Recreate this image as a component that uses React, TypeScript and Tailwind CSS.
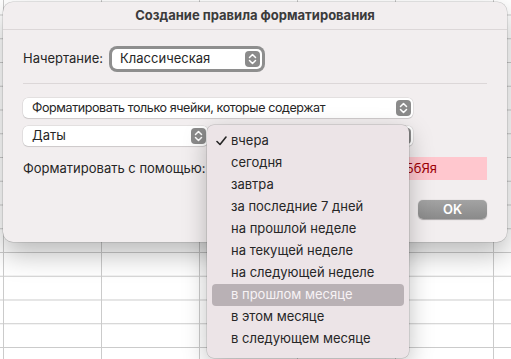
import React from "react";

const font = { fontFamily: '"Inter", "Liberation Sans", sans-serif' };

const menuItems = [
  "вчера",
  "сегодня",
  "завтра",
  "за последние 7 дней",
  "на прошлой неделе",
  "на текущей неделе",
  "на следующей неделе",
  "в прошлом месяце",
  "в этом месяце",
  "в следующем месяце",
];

function Stepper() {
  return (
    <span className="flex h-[16px] w-[15px] items-center justify-center rounded-[4px] bg-[#8b8b8b]">
      <svg width="9" height="12" viewBox="0 0 9 12" fill="none" stroke="white" strokeWidth="1.5" strokeLinecap="round" strokeLinejoin="round">
        <path d="M1.5 4.5 L4.5 1.5 L7.5 4.5" />
        <path d="M1.5 7.5 L4.5 10.5 L7.5 7.5" />
      </svg>
    </span>
  );
}

function Select({ label, className = "" }: { label: string; className?: string }) {
  return (
    <div
      className={`flex h-[20px] items-center justify-between rounded-[5px] bg-white pl-[9px] pr-[2px] text-[#262626] shadow-[0_0_0_0.5px_rgba(0,0,0,0.12),0_1px_1px_rgba(0,0,0,0.1)] ${className}`}
    >
      <span>{label}</span>
      <Stepper />
    </div>
  );
}

export default function App() {
  return (
    <div
      style={font}
      className="relative h-[359px] w-[511px] overflow-hidden bg-white bg-[linear-gradient(to_right,#cbcbcb_1px,transparent_1px),linear-gradient(to_bottom,#cbcbcb_1px,transparent_1px)] bg-[size:98px_23.75px] bg-[position:3px_14.5px]"
    >
      {/* dialog window */}
      <div className="absolute left-[3px] top-[2px] flex h-[240px] w-[504px] flex-col rounded-[10px] bg-[#f2eeef] shadow-[0_12px_28px_rgba(0,0,0,0.28),0_0_0_0.5px_rgba(0,0,0,0.18)]">
        <div className="flex h-[28px] items-center justify-center border-b border-[#dcd7d8] text-[13px] font-bold text-[#3b3b3b]">
          Создание правила форматирования
        </div>

        <div className="flex flex-col px-[20px]">
          <div className="mt-[16px] flex items-center gap-[6px] text-[13px] text-[#262626]">
            <span>Начертание:</span>
            <div className="rounded-[8px] bg-[#8e8e8e] p-[3px]">
              <div className="flex h-[20px] w-[150px] items-center justify-between rounded-[5px] bg-white pl-[8px] pr-[2px]">
                <span>Классическая</span>
                <Stepper />
              </div>
            </div>
          </div>

          <div className="mt-[11px] h-px bg-[#dcd7d8]" />

          <Select
            label="Форматировать только ячейки, которые содержат"
            className="mt-[14px] w-[390px] text-[12.5px] tracking-[-0.4px]"
          />

          <div className="mt-[8px] flex gap-[4px] text-[13px]">
            <Select label="Даты" className="w-[185px]" />
            <Select label="" className="w-[201px]" />
          </div>

          <div className="mt-[11px] flex h-[23px] items-center justify-between text-[13px] text-[#262626]">
            <span>Форматировать с помощью:</span>
            <div className="flex h-[23px] w-[276px] items-center justify-end bg-[#ffc7ce] pr-[50px] text-[#9c0006]">
              АаБбЯя
            </div>
          </div>

          <div className="mt-[20px] flex justify-end">
            <button
              type="button"
              className="flex h-[19px] w-[69px] items-center justify-center rounded-[5px] bg-[linear-gradient(to_bottom,#a3a3a3,#8a8a8a)] text-[13px] font-semibold text-white shadow-[0_0.5px_1px_rgba(0,0,0,0.3)]"
            >
              OK
            </button>
          </div>
        </div>
      </div>

      {/* popup menu */}
      <div className="absolute left-[207px] top-[125px] w-[202px] rounded-[7px] bg-[#ece4e7] pb-[8px] pt-[5px] shadow-[0_8px_24px_rgba(0,0,0,0.25),0_0_0_0.5px_rgba(0,0,0,0.2)]">
        {menuItems.map((item, i) => {
          const active = i === 7;
          return (
            <div
              key={item}
              className={`mx-[5px] flex h-[22px] items-center rounded-[4px] text-[13px] ${
                active ? "bg-[#b9b1b5] text-[#f7f3f5]" : "text-[#262626]"
              }`}
            >
              <span className="flex w-[19px] justify-end pr-[4px]">
                {i === 0 ? (
                  <svg width="11" height="10" viewBox="0 0 11 10" fill="none" stroke="#262626" strokeWidth="1.6" strokeLinecap="round" strokeLinejoin="round">
                    <path d="M1 5.5 L4 8.5 L10 1" />
                  </svg>
                ) : null}
              </span>
              <span>{item}</span>
            </div>
          );
        })}
      </div>
    </div>
  );
}
